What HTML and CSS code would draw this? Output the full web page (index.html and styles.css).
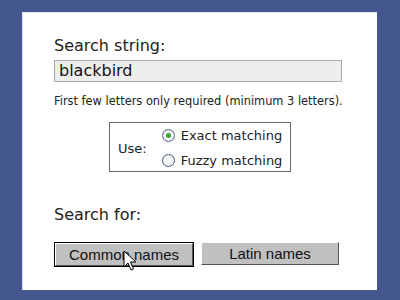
FILE: index.html
```html
<!DOCTYPE html>
<html>
<head>
<meta charset="utf-8">
<link rel="stylesheet" href="styles.css">
</head>
<body>
<div class="panel">
  <div class="label">Search string:</div>
  <div class="input">blackbird</div>
  <div class="hint">First few letters only required (minimum 3 letters).</div>
  <div class="usebox-wrap">
    <div class="usebox">
      <div class="use">Use:</div>
      <div class="options">
        <div class="opt"><span class="radio checked"></span>Exact matching</div>
        <div class="opt"><span class="radio"></span>Fuzzy matching</div>
      </div>
    </div>
  </div>
  <div class="label searchfor">Search for:</div>
  <div class="buttons">
    <div class="btn focused"><span class="btn-inner">Common names</span>
      <svg class="cursor" width="14" height="22" viewBox="0 0 14 22"><path d="M1 1 L1 17 L5 13 L8 20 L10.5 19 L7.5 12 L13 12 Z" fill="#fff" stroke="#000" stroke-width="1" stroke-linejoin="miter"/></svg>
    </div>
    <div class="btn"><span class="btn-inner">Latin names</span></div>
  </div>
</div>
</body>
</html>
```
FILE: styles.css
```css
html, body {
  margin: 0;
  padding: 0;
  background: #44578f;
  width: 400px;
  height: 300px;
  overflow: hidden;
}
body {
  padding: 12px 23px 10px 22px;
  box-sizing: border-box;
  font-family: "DejaVu Sans", Verdana, sans-serif;
  color: #222;
}
.panel {
  background: #fff;
  height: 278px;
  box-sizing: border-box;
  padding: 23px 31px 0 31px;
  border-top: 1px solid #dde3f0;
  border-left: 1px solid #dde3f0;
}
.label {
  font-size: 16px;
  line-height: 20px;
  color: #222;
}
.input {
  margin-top: 4px;
  width: 288px;
  height: 22px;
  box-sizing: border-box;
  border: 1px solid #aaa;
  background: #eee;
  font-size: 16px;
  line-height: 19px;
  padding-left: 4px;
  color: #111;
}
.hint {
  margin-top: 12px;
  font-size: 11.4px;
  line-height: 14px;
}
.usebox-wrap {
  margin-top: 14px;
  padding-left: 55px;
}
.usebox {
  display: inline-flex;
  align-items: center;
  border: 1px solid #666;
  padding: 3px 8px 1px 8px;
  font-size: 13px;
  gap: 15px;
}
.options {
  display: flex;
  flex-direction: column;
  gap: 6px;
}
.opt {
  display: flex;
  align-items: center;
  line-height: 19px;
}
.radio {
  width: 11px;
  height: 11px;
  border: 1px solid #4a5f80;
  border-radius: 50%;
  margin-right: 6px;
  background: radial-gradient(circle at 50% 50%, #fff 0, #e8e8e8 100%);
  position: relative;
}
.radio.checked::after {
  content: "";
  position: absolute;
  left: 3px;
  top: 3px;
  width: 5px;
  height: 5px;
  border-radius: 50%;
  background: #3aa53a;
}
.searchfor {
  margin-top: 33px;
}
.buttons {
  margin-top: 17px;
  display: flex;
  gap: 7px;
  align-items: flex-start;
}
.btn {
  position: relative;
  font-family: "Liberation Sans", Arial, sans-serif;
  font-size: 15px;
  color: #111;
}
.btn-inner {
  display: block;
  width: 138px;
  height: 23px;
  box-sizing: border-box;
  background: #c0c0c0;
  border-top: 1px solid #fff;
  border-left: 1px solid #fff;
  border-right: 1px solid #555;
  border-bottom: 1px solid #555;
  text-align: center;
  line-height: 21px;
}
.btn.focused {
  border: 1px solid #000;
}
.cursor {
  position: absolute;
  left: 68px;
  top: 7px;
}
```
